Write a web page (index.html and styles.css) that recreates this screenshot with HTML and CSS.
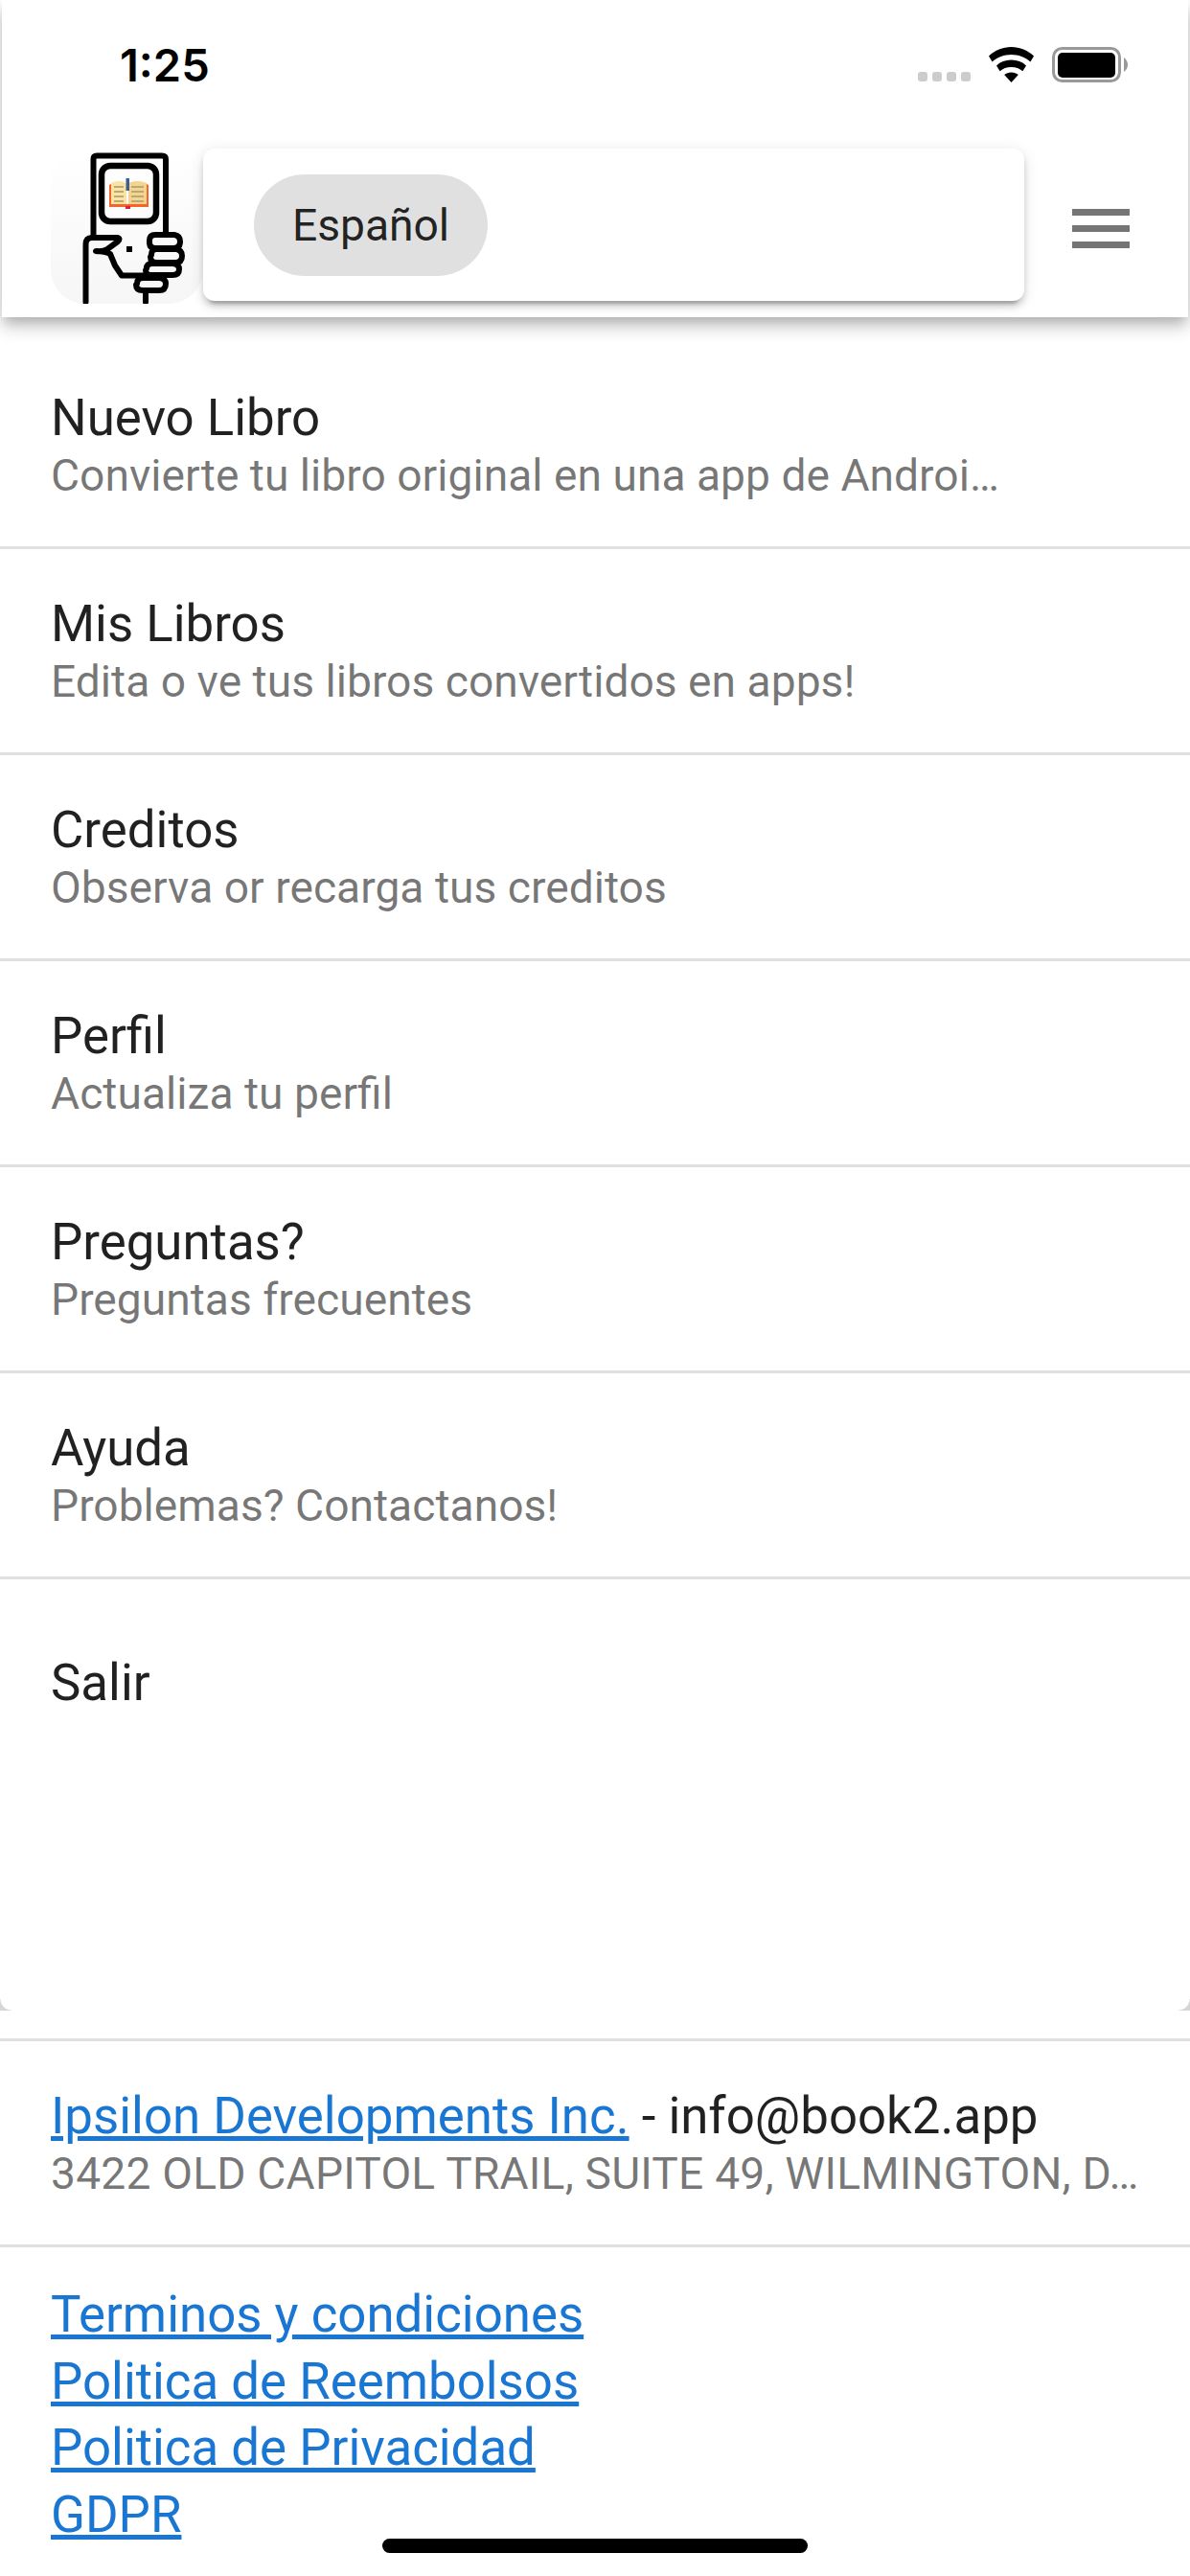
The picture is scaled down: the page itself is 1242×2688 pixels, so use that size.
FILE: index.html
```html
<!DOCTYPE html>
<html lang="es">
<head>
<meta charset="utf-8">
<title>Book2</title>
<link rel="stylesheet" href="styles.css">
</head>
<body>
<div class="screen">
  <header class="appbar">
    <div class="status">
      <span class="time">1:25</span>
      <div class="status-icons">
        <div class="signal"><i></i><i></i><i></i><i></i></div>
        <svg class="wifi" width="47" height="37" viewBox="0 0 47 37"><path d="M23.5 0C14.5 0 6.5 3.4 0 9.5L3.6 15.5C9 10.7 16 8 23.5 8S38 10.7 43.4 15.5L47 9.5C40.5 3.4 32.5 0 23.5 0Z"/><path d="M23.5 13.5C17.4 13.5 12 15.6 8 19.4L11.6 25.2C14.7 22.6 18.9 21 23.5 21S32.3 22.6 35.4 25.2L39 19.4C35 15.6 29.6 13.5 23.5 13.5Z"/><path d="M23.5 26.5C20.6 26.5 18.2 27.4 16.2 29L23.5 37 30.8 29C28.8 27.4 26.4 26.5 23.5 26.5Z"/></svg>
        <svg class="battery" width="79" height="37" viewBox="0 0 79 37"><rect x="1.5" y="1.5" width="69" height="34" rx="9" fill="none" stroke="#999" stroke-width="3"/><rect x="6" y="6" width="60" height="26" rx="5"/><path d="M75 11C77.500 13 79 15.500 79 18.500S77.500 24 75 26Z" fill="#999"/></svg>
      </div>
    </div>
    <div class="toolbar">
      <div class="logo">
        <svg width="159" height="162" viewBox="0 0 159 162">
          <g fill="none" stroke="#000" stroke-width="6" stroke-linejoin="round" stroke-linecap="round">
            <path d="M44.500 92V11Q44.500 7.500 48 7.500H116Q120 7.500 120 11V89"/>
            <rect x="53" y="18" width="57" height="58" rx="9" stroke-width="6.500"/>
            <path d="M36.500 160V100Q36.500 93 43 93H70Q73 94 70 97L59 105Q54 108 47 107 57 107 62 110L67 122 74 132.500H97"/>
            <path d="M103 96Q103 90 109 90H129Q135 91 135 97 135 104 128 104H109Q103 104 103 98Z"/>
            <path d="M105 111Q105 105 110 105H131Q137 106 137 112 137 119 130 119H110Q104 119 104 113Z"/>
            <path d="M100 125Q100 120 106 120H128Q134 121 134 126 134 132 127 132H105Q99 132 99 127Z"/>
            <path d="M90 141Q90 135 96 135H114Q120 136 120 141 120 148 113 148H96Q89 148 89 142Z"/>
            <path d="M99 148V160"/>
          </g>
          <rect x="79" y="102" width="6" height="6"/>
          <path d="M63 36Q71 32 79 36V59H63Z" fill="#fbe3a3"/>
          <path d="M81 36Q90 32 100 36V59H81Z" fill="#f5d58d"/>
          <path d="M63 37V58H100V37L102 38V61H61V38Z" fill="#f4642b"/>
          <path d="M66 40H76M66 45H76M66 50H76M66 55H76M84 40H97M84 45H97M84 50H97M84 55H97" stroke="#b9a878" stroke-width="1.800"/>
          <rect x="78.500" y="31" width="3.500" height="13" fill="#3c5f96"/>
          <rect x="78" y="60" width="5" height="3" fill="#e0203a"/>
        </svg>
      </div>
      <div class="lang-card"><span class="chip">Español</span></div>
      <div class="menu"><i></i><i></i><i></i></div>
    </div>
  </header>
  <main class="panel">
    <div class="row"><div class="title">Nuevo Libro</div><div class="sub">Convierte tu libro original en una app de Androi…</div></div>
    <div class="row"><div class="title">Mis Libros</div><div class="sub">Edita o ve tus libros convertidos en apps!</div></div>
    <div class="row"><div class="title">Creditos</div><div class="sub">Observa or recarga tus creditos</div></div>
    <div class="row"><div class="title">Perfil</div><div class="sub">Actualiza tu perfil</div></div>
    <div class="row"><div class="title">Preguntas?</div><div class="sub">Preguntas frecuentes</div></div>
    <div class="row"><div class="title">Ayuda</div><div class="sub">Problemas? Contactanos!</div></div>
    <div class="row row-plain"><div class="title">Salir</div></div>
  </main>
  <footer class="footer">
    <div class="company">
      <div class="title"><a href="#">Ipsilon Developments Inc.</a> - info@book2.app</div>
      <div class="sub address">3422 OLD CAPITOL TRAIL, SUITE 49, WILMINGTON, D…</div>
    </div>
    <nav class="links">
      <a href="#">Terminos y condiciones</a>
      <a href="#">Politica de Reembolsos</a>
      <a href="#">Politica de Privacidad</a>
      <a href="#">GDPR</a>
    </nav>
  </footer>
  <div class="home-bar"></div>
</div>
</body>
</html>
```
FILE: styles.css
```css
* { box-sizing: border-box; }
html, body { margin: 0; padding: 0; background: #fff; }
.screen {
  position: relative;
  width: 1242px;
  height: 2688px;
  overflow: hidden;
  display: flex;
  flex-direction: column;
  background: #fff;
  font-family: Roboto, sans-serif;
}
.appbar {
  position: relative;
  z-index: 2;
  height: 331px;
  margin: 0 2px;
  background: #fff;
  box-shadow: 0 6px 12px -3px rgba(0,0,0,.2), 0 12px 15px rgba(0,0,0,.14), 0 3px 30px rgba(0,0,0,.06);
}
.status {
  height: 132px;
  padding: 41px 63px 0 123px;
  display: flex;
  justify-content: space-between;
  align-items: flex-start;
}
.time {
  font-family: Inter, sans-serif;
  font-size: 47px;
  font-weight: 600;
  line-height: 54px;
  color: #000;
}
.status-icons { display: flex; align-items: flex-start; padding-top: 8px; }
.signal { display: flex; gap: 5px; margin: 26px 19px 0 0; }
.signal i { width: 10px; height: 10px; border-radius: 3px; background: #ccc; }
.wifi { margin-right: 19px; }
.toolbar {
  height: 199px;
  padding: 23px 0 0 51px;
  display: flex;
  align-items: flex-start;
}
.logo {
  width: 159px;
  height: 162px;
  border-radius: 36px;
  background: linear-gradient(#fff, #f6f6f6);
}
.logo svg { display: block; }
.lang-card {
  width: 857px;
  height: 159px;
  padding: 27px 53px;
  background: #fff;
  border-radius: 12px;
  box-shadow: 0 9px 3px -6px rgba(0,0,0,.2), 0 6px 6px rgba(0,0,0,.14), 0 3px 15px rgba(0,0,0,.12);
  position: relative;
}
.chip {
  display: flex;
  align-items: center;
  justify-content: center;
  width: 244px;
  height: 106px;
  border-radius: 53px;
  background: #e0e0e0;
  font-size: 46.200px;
  color: rgba(0,0,0,.87);
}
.menu {
  margin: 63px 0 0 50px;
  width: 60px;
  display: flex;
  flex-direction: column;
  gap: 10px;
}
.menu i { height: 7px; background: #757575; }
.panel {
  height: 1767px;
  padding-top: 27px;
  background: #fff;
  position: relative;
}
.panel::before, .panel::after {
  content: "";
  position: absolute;
  bottom: 0;
  width: 12px;
  height: 12px;
}
.panel::before { left: 0; background: radial-gradient(circle at 100% 0, transparent 11px, #d6d6d6 12px); }
.panel::after { right: 0; background: radial-gradient(circle at 0 0, transparent 11px, #d6d6d6 12px); }
.row {
  height: 215px;
  padding: 0 53px;
  border-bottom: 3px solid #e0e0e0;
  display: flex;
  flex-direction: column;
  justify-content: center;
}
.row-plain { border-bottom: 0; }
.title {
  font-size: 52.800px;
  line-height: 64px;
  color: rgba(0,0,0,.87);
  white-space: nowrap;
}
.sub {
  font-size: 46.200px;
  line-height: 56px;
  color: rgba(0,0,0,.54);
  white-space: nowrap;
}
.address { letter-spacing: .18px; }
a { color: #1976d2; text-decoration: underline; }
.footer { position: relative; }
.company {
  margin-top: 29px;
  height: 218px;
  padding: 0 53px;
  border-top: 3px solid #e0e0e0;
  border-bottom: 3px solid #e0e0e0;
  display: flex;
  flex-direction: column;
  justify-content: center;
}
.links {
  padding: 36px 53px 0;
  display: flex;
  flex-direction: column;
  font-size: 52.800px;
  line-height: 69.500px;
}
.links a { align-self: flex-start; }
.home-bar {
  position: absolute;
  left: 399px;
  top: 2649px;
  width: 444px;
  height: 15px;
  border-radius: 8px;
  background: #000;
}
```
